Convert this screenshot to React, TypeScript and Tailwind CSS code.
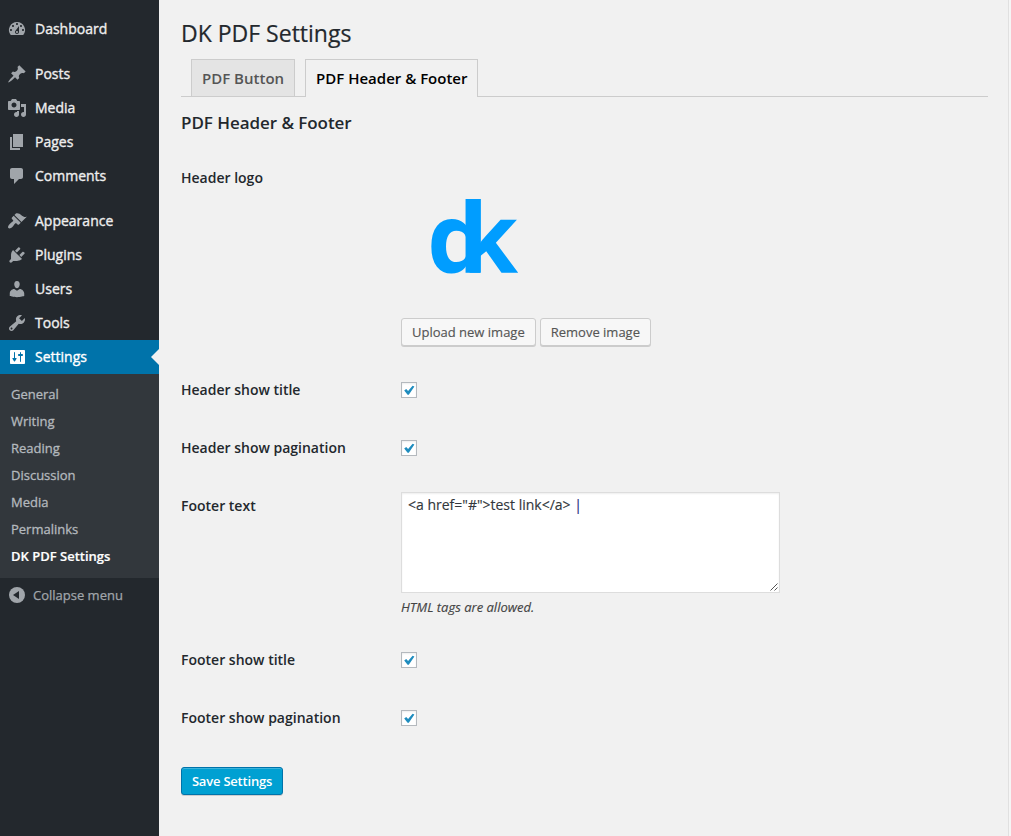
import type { ReactNode } from "react";

const icons: Record<string, string> = {
  Dashboard:
    "M3.76 16h12.48A7.998 7.998 0 0 0 10 3a7.998 7.998 0 0 0-6.24 13zM10 4c.55 0 1 .45 1 1s-.45 1-1 1-1-.45-1-1 .45-1 1-1zM6 6c.55 0 1 .45 1 1s-.45 1-1 1-1-.45-1-1 .45-1 1-1zm8 0c.55 0 1 .45 1 1s-.45 1-1 1-1-.45-1-1 .45-1 1-1zm-5.37 5.55L12 7v6c0 1.1-.9 2-2 2s-2-.9-2-2c0-.57.24-1.08.63-1.45zM4 10c.55 0 1 .45 1 1s-.45 1-1 1-1-.45-1-1 .45-1 1-1zm12 0c.55 0 1 .45 1 1s-.45 1-1 1-1-.45-1-1 .45-1 1-1zm-5 3c0-.55-.45-1-1-1s-1 .45-1 1 .45 1 1 1 1-.45 1-1z",
  Posts:
    "M10.44 3.02l1.82-1.82 6.36 6.35-1.83 1.82c-1.05-.68-2.48-.57-3.41.36l-.75.75c-.92.93-1.04 2.35-.35 3.41l-1.83 1.82-2.41-2.41-2.8 2.79c-.42.42-3.38 2.71-3.8 2.29s1.86-3.39 2.28-3.81l2.79-2.79L4.1 9.36l1.83-1.82c1.05.69 2.48.57 3.4-.36l.75-.75c.93-.92 1.05-2.35.36-3.41z",
  Media:
    "M13 11V4c0-.55-.45-1-1-1h-1.67L9 1H5L3.67 3H2c-.55 0-1 .45-1 1v7c0 .55.45 1 1 1h10c.55 0 1-.45 1-1zM7 4.5c1.38 0 2.5 1.12 2.5 2.5S8.38 9.5 7 9.5 4.5 8.38 4.5 7 5.62 4.5 7 4.5zM14 6h5v10.5c0 1.38-1.12 2.5-2.5 2.5S14 17.88 14 16.5s1.12-2.5 2.5-2.5c.17 0 .34.02.5.05V9h-3V6zm-4 8.05V13h2v3.5c0 1.38-1.12 2.5-2.5 2.5S7 17.88 7 16.5 8.12 14 9.5 14c.17 0 .34.02.5.05z",
  Pages: "M6 15V2h10v13H6zm-1 1h8v2H3V5h2v11z",
  Comments: "M5 2h9c1.1 0 2 .9 2 2v7c0 1.1-.9 2-2 2h-2l-5 5v-5H5c-1.1 0-2-.9-2-2V4c0-1.1.9-2 2-2z",
  Appearance:
    "M14.48 11.06L7.41 3.99l1.5-1.5c.5-.56 2.3-.47 3.51.32 1.21.8 1.43 1.28 2.91 2.1 1.18.64 2.45 1.26 4.45.85zm-.71.71L6.7 4.7 4.93 6.47c-.39.39-.39 1.02 0 1.41l1.06 1.06c.39.39.39 1.03 0 1.42-.6.6-1.43 1.11-2.21 1.69-.35.26-.7.53-1.01.84C1.43 14.23.4 16.08 1.4 17.07c.99 1 2.84-.03 4.18-1.36.31-.31.58-.66.85-1.02.57-.78 1.08-1.61 1.69-2.21.39-.39 1.02-.39 1.41 0l1.06 1.06c.39.39 1.02.39 1.41 0z",
  Plugins:
    "M13.11 4.36L9.87 7.6 8 5.73l3.24-3.24c.35-.34 1.05-.2 1.56.32.52.51.66 1.21.31 1.55zm-8 1.77l.91-1.12 9.01 9.01-1.19.84c-.71.71-2.63 1.16-3.82 1.16H6.14L4.9 17.26c-.59.59-1.54.59-2.12 0-.59-.58-.59-1.53 0-2.12l1.24-1.24v-3.88c0-1.13.4-3.19 1.09-3.89zm7.26 3.97l3.24-3.24c.34-.35 1.04-.21 1.55.31.52.51.66 1.21.31 1.55l-3.24 3.25z",
  Users:
    "M10 9.25c-2.27 0-2.73-3.44-2.73-3.44C7 4.02 7.82 2 9.97 2c2.16 0 2.98 2.02 2.71 3.81 0 0-.41 3.44-2.68 3.44zm0 2.57L12.72 10c2.39 0 4.52 2.33 4.52 4.53v2.49s-3.65 1.13-7.24 1.13c-3.65 0-7.24-1.13-7.24-1.13v-2.49c0-2.25 1.94-4.48 4.47-4.48z",
  Tools:
    "M16.68 9.77c-1.34 1.34-3.3 1.67-4.95.99l-5.41 6.52c-.99.99-2.59.99-3.58 0s-.99-2.59 0-3.57l6.52-5.42c-.68-1.65-.35-3.61.99-4.95 1.28-1.28 3.12-1.62 4.72-1.06l-2.89 2.89 2.82 2.82 2.86-2.87c.53 1.58.18 3.39-1.08 4.65zM3.81 16.21c.4.39 1.04.39 1.43 0 .4-.4.4-1.04 0-1.43-.39-.4-1.03-.4-1.43 0-.39.39-.39 1.03 0 1.43z",
  Settings:
    "M18 16V4c0-.55-.45-1-1-1H4c-.55 0-1 .45-1 1v12c0 .55.45 1 1 1h13c.55 0 1-.45 1-1zM8 11h1c.55 0 .8.6.4 1L8 14.2c-.3.5-.7.5-1 0L5.6 12c-.4-.4-.15-1 .4-1h1V5.5c0-.28.22-.5.5-.5s.5.22.5.5V11zm5-2h-1c-.55 0-1-.45-1-1s.45-1 1-1h1V5.5c0-.28.22-.5.5-.5s.5.22.5.5V7h1c.55 0 1 .45 1 1s-.45 1-1 1h-1v5.5c0 .28-.22.5-.5.5s-.5-.22-.5-.5V9z",
};

const menuGroups = [
  ["Dashboard"],
  ["Posts", "Media", "Pages", "Comments"],
  ["Appearance", "Plugins", "Users", "Tools", "Settings"],
];

const submenu = ["General", "Writing", "Reading", "Discussion", "Media", "Permalinks", "DK PDF Settings"];

function MenuItem({ name }: { name: string }) {
  const active = name === "Settings";
  return (
    <li
      className={
        active
          ? "relative flex h-[34px] items-center bg-[#0073aa] pl-[7px] text-white"
          : "relative flex h-[34px] items-center pl-[7px] text-[#eee]"
      }
    >
      <svg
        viewBox="0 0 20 20"
        fillRule="evenodd"
        className={active ? "size-5 fill-white" : "size-5 fill-[#a0a5aa]"}
      >
        <path d={icons[name]} />
      </svg>
      <span className="ml-2 text-[14px] leading-[18px] [-webkit-text-stroke:0.35px]">{name}</span>
      {active && (
        <span className="absolute top-[9px] right-0 border-y-8 border-r-8 border-y-transparent border-r-[#f1f1f1]" />
      )}
    </li>
  );
}

function Sidebar() {
  return (
    <nav className="flex w-[159px] shrink-0 flex-col bg-[#23282d] pt-3">
      <div className="flex flex-col gap-[11px]">
        {menuGroups.map((group) => (
          <ul key={group[0]}>
            {group.map((name) => (
              <MenuItem key={name} name={name} />
            ))}
          </ul>
        ))}
      </div>
      <ul className="h-[204px] bg-[#32373c] pt-[7px] pl-[11px] text-[13px] text-[#b4b9be]">
        {submenu.map((name) => (
          <li
            key={name}
            className={
              name === "DK PDF Settings"
                ? "flex h-[27px] items-center font-semibold text-white [-webkit-text-stroke:0.2px]"
                : "flex h-[27px] items-center [-webkit-text-stroke:0.3px]"
            }
          >
            {name}
          </li>
        ))}
      </ul>
      <div className="flex h-[34px] items-center pl-[7px] text-[13px] text-[#a0a5aa]">
        <svg viewBox="0 0 20 20" className="size-5">
          <circle cx="10" cy="10" r="8" fill="#a0a5aa" />
          <path d="M12 6v8l-6-4z" fill="#23282d" />
        </svg>
        <span className="ml-1.5 pt-0.5 [-webkit-text-stroke:0.25px]">Collapse menu</span>
      </div>
    </nav>
  );
}

function Row({ label, className, children }: { label: string; className: string; children: ReactNode }) {
  return (
    <div className={className}>
      <div className="w-[220px] shrink-0 pt-5 text-[14px] leading-[18px] font-semibold">{label}</div>
      <div>{children}</div>
    </div>
  );
}

function Check() {
  return (
    <span className="mt-[21px] flex size-4 items-center justify-center border border-[#b4b9be] bg-white shadow-[inset_0_1px_2px_rgba(0,0,0,0.07)]">
      <svg viewBox="0 0 14 14" className="size-3.5">
        <path d="M2.2 7.4 4.2 6l1.9 2.1L10.6 2.7l1.8.9-5.6 8.1H5.6z" fill="#1e8cbe" />
      </svg>
    </span>
  );
}

function Button({ children }: { children: ReactNode }) {
  return (
    <button className="h-7 rounded-[3px] border border-[#ccc] bg-[#f7f7f7] px-2.5 text-[13px] leading-[26px] whitespace-nowrap text-[#555] shadow-[0_1px_0_#ccc] [-webkit-text-stroke:0.15px]">
      {children}
    </button>
  );
}

export default function App() {
  return (
    <div className="flex h-[836px] w-[1011px] overflow-hidden bg-[#f1f1f1] font-['Open_Sans',sans-serif] text-[#23282d]">
      <Sidebar />
      <main className="flex w-[849px] shrink-0 flex-col pr-5 pl-[22px]">
        <h1 className="mt-[19px] h-[29px] text-[23px] leading-[29px] [-webkit-text-stroke:0.2px]">DK PDF Settings</h1>
        <div className="mt-[11px] flex h-[38px] items-end border-b border-[#ccc] pl-2.5 text-[15px] leading-6 font-semibold">
          <a className="h-[37px] border border-b-0 border-[#ccc] bg-[#e4e4e4] px-2.5 pt-[6px] text-[#555]">
            PDF Button
          </a>
          <a className="-mb-px ml-2.5 h-[38px] border border-b-0 border-[#ccc] bg-[#f1f1f1] px-2.5 pt-[6px] text-black">
            PDF Header &amp; Footer
          </a>
        </div>
        <h2 className="mt-[14px] h-6 text-[17px] leading-6 font-semibold tracking-[-0.05px]">
          PDF Header &amp; Footer
        </h2>
        <div className="mt-[14px] flex flex-col">
          <Row label="Header logo" className="flex h-[212px]">
            <div className="h-[169px] pt-[26px] pl-[26px]">
              <div className="text-[97px] leading-[120px] font-bold tracking-[-30.5px] text-[#009dff]">dk</div>
            </div>
            <div className="flex gap-1">
              <Button>Upload new image</Button>
              <Button>Remove image</Button>
            </div>
          </Row>
          <Row label="Header show title" className="flex h-[58px]">
            <Check />
          </Row>
          <Row label="Header show pagination" className="flex h-[58px]">
            <Check />
          </Row>
          <Row label="Footer text" className="flex h-[154px]">
            <div className="mt-[15px] flex h-[101px] w-[379px] items-start justify-between border border-[#ddd] bg-white pl-1.5 text-[14px] leading-5 text-[#32373c] shadow-[inset_0_1px_2px_rgba(0,0,0,0.07)]">
              <span className="pt-[2px] whitespace-pre [-webkit-text-stroke:0.15px]">
                {'<a href="#">test link</a> '}
                <span className="text-[#1b2a80]">|</span>
              </span>
              <svg viewBox="0 0 8 8" className="mr-px mb-px size-2 self-end">
                <path d="M.5 7.5l7-7M4.5 7.5l3-3" stroke="#555" fill="none" />
              </svg>
            </div>
            <p className="mt-1 text-[13px] leading-5 italic text-[#444] [-webkit-text-stroke:0.15px]">
              HTML tags are allowed.
            </p>
          </Row>
          <Row label="Footer show title" className="flex h-[58px]">
            <Check />
          </Row>
          <Row label="Footer show pagination" className="flex h-[58px]">
            <Check />
          </Row>
        </div>
        <button className="mt-5 h-7 w-[102px] self-start rounded-[3px] border border-[#0073aa] bg-[#00a0d2] text-[13px] leading-[26px] font-semibold tracking-[-0.2px] whitespace-nowrap text-white shadow-[inset_0_1px_0_rgba(120,200,230,0.5),0_1px_0_rgba(0,0,0,0.15)]">
          Save Settings
        </button>
      </main>
      <div className="w-[3px] shrink-0 border-l border-[#e0e0e0] bg-[#f5f5f5]" />
    </div>
  );
}
